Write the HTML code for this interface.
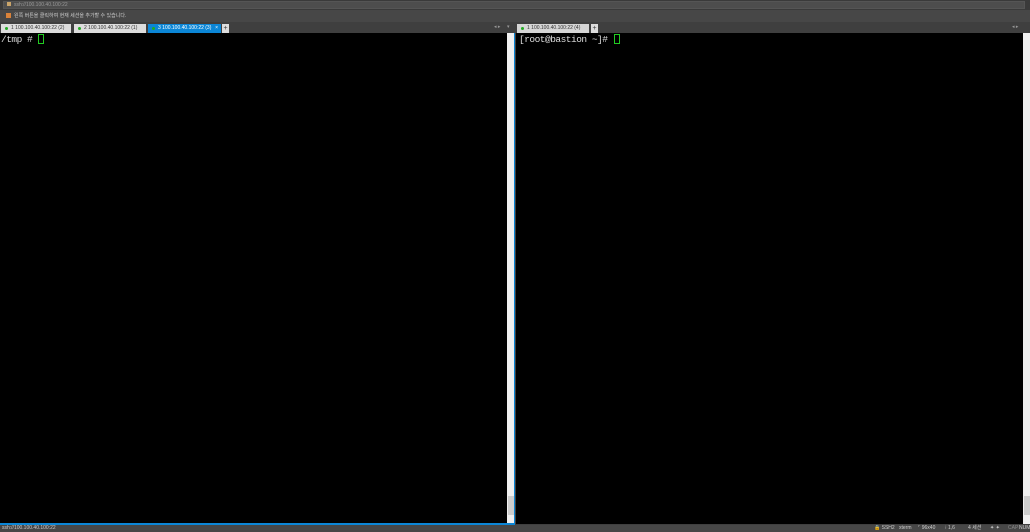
<!DOCTYPE html>
<html><head><meta charset="utf-8"><style>
*{margin:0;padding:0;box-sizing:border-box}
body{width:1030px;height:532px;background:#3f3f3f;overflow:hidden;position:relative;font-family:"Liberation Sans","Noto Sans CJK KR",sans-serif}
.a{position:absolute}
.tab{position:absolute;top:24px;height:9px;font-size:5px;line-height:9px;color:#333;background:#dcdcdc;padding-left:10px}
.tab i{position:absolute;left:4px;top:3px;width:3px;height:3px;border-radius:50%;background:#2a2}
.term{font-family:"Liberation Mono",monospace;font-size:9.5px;letter-spacing:-0.5px;color:#ddd;line-height:12px}
.cur{display:inline-block;width:6px;height:10px;border:1px solid #2c2;vertical-align:-2px;margin-left:1px}
</style></head><body>
<div class="a" style="left:0;top:0;width:1030px;height:10px;background:#3a3a3a"></div>
<div class="a" style="left:3px;top:1px;width:1022px;height:8px;background:#4d4d4d;border:1px solid #555"></div>
<div class="a" style="left:7px;top:2px;width:4px;height:4px;background:#c9a46a"></div>
<div class="a" style="left:14px;top:1px;font-size:5px;line-height:8px;color:#999">ssh://100.100.40.100:22</div>
<div class="a" style="left:0;top:10px;width:1030px;height:12px;background:#474747"></div>
<div class="a" style="left:6px;top:13px;width:5px;height:5px;background:#d9823a"></div>
<div class="a" style="left:14px;top:10px;font-size:5px;line-height:12px;color:#ccc">왼쪽 버튼을 클릭하여 현재 세션을 추가할 수 있습니다.</div>
<div class="a" style="left:0;top:22px;width:1030px;height:12px;background:#3f3f3f"></div>
<div class="tab" style="left:1px;width:70px"><i></i>1 100.100.40.100:22 (2)</div>
<div class="tab" style="left:74px;width:72px"><i></i>2 100.100.40.100:22 (1)</div>
<div class="tab" style="left:148px;width:73px;background:#0b86d6;color:#fff"><i></i>3 100.100.40.100:22 (3)<span style="position:absolute;right:3px">×</span></div>
<div class="a" style="left:222px;top:24px;width:7px;height:9px;background:#ddd;font-size:7px;line-height:9px;text-align:center;color:#333">+</div>
<div class="a" style="left:494px;top:24px;font-size:5px;color:#999">◂ ▸</div>
<div class="a" style="left:507px;top:24px;font-size:5px;color:#999">▾</div>
<div class="tab" style="left:517px;width:72px;background:#d6d6d6"><i></i>1 100.100.40.100:22 (4)</div>
<div class="a" style="left:591px;top:24px;width:7px;height:9px;background:#ddd;font-size:7px;line-height:9px;text-align:center;color:#333">+</div>
<div class="a" style="left:1012px;top:24px;font-size:5px;color:#999">◂ ▸</div>
<div class="a" style="left:0;top:33px;width:515px;height:492px;background:#000;border-bottom:2px solid #0b86d6;border-right:1px solid #0b86d6"></div>
<div class="a term" style="left:1px;top:34px">/tmp # <span class="cur"></span></div>
<div class="a" style="left:507px;top:33px;width:7px;height:490px;background:#f0f0f0"></div>
<div class="a" style="left:508px;top:496px;width:6px;height:19px;background:#cdcdcd"></div>
<div class="a" style="left:516px;top:33px;width:514px;height:491px;background:#000"></div>
<div class="a term" style="left:519px;top:34px">[root@bastion ~]# <span class="cur"></span></div>
<div class="a" style="left:1023px;top:33px;width:7px;height:491px;background:#f0f0f0"></div>
<div class="a" style="left:1024px;top:496px;width:6px;height:19px;background:#cdcdcd"></div>
<div class="a" style="left:0;top:525px;width:1030px;height:7px;background:#474747;font-size:5px;line-height:7px;color:#ccc">
<span class="a" style="left:2px">ssh://100.100.40.100:22</span>
<span class="a" style="left:874px">🔒 SSH2</span>
<span class="a" style="left:899px">xterm</span>
<span class="a" style="left:918px">⌜ 96x40</span>
<span class="a" style="left:945px">⁝ 1,6</span>
<span class="a" style="left:968px">4 세션</span>
<span class="a" style="left:990px">✦ ✦</span>
<span class="a" style="left:1008px;color:#888">CAP</span>
<span class="a" style="left:1019px">NUM</span>
</div>
</body></html>
